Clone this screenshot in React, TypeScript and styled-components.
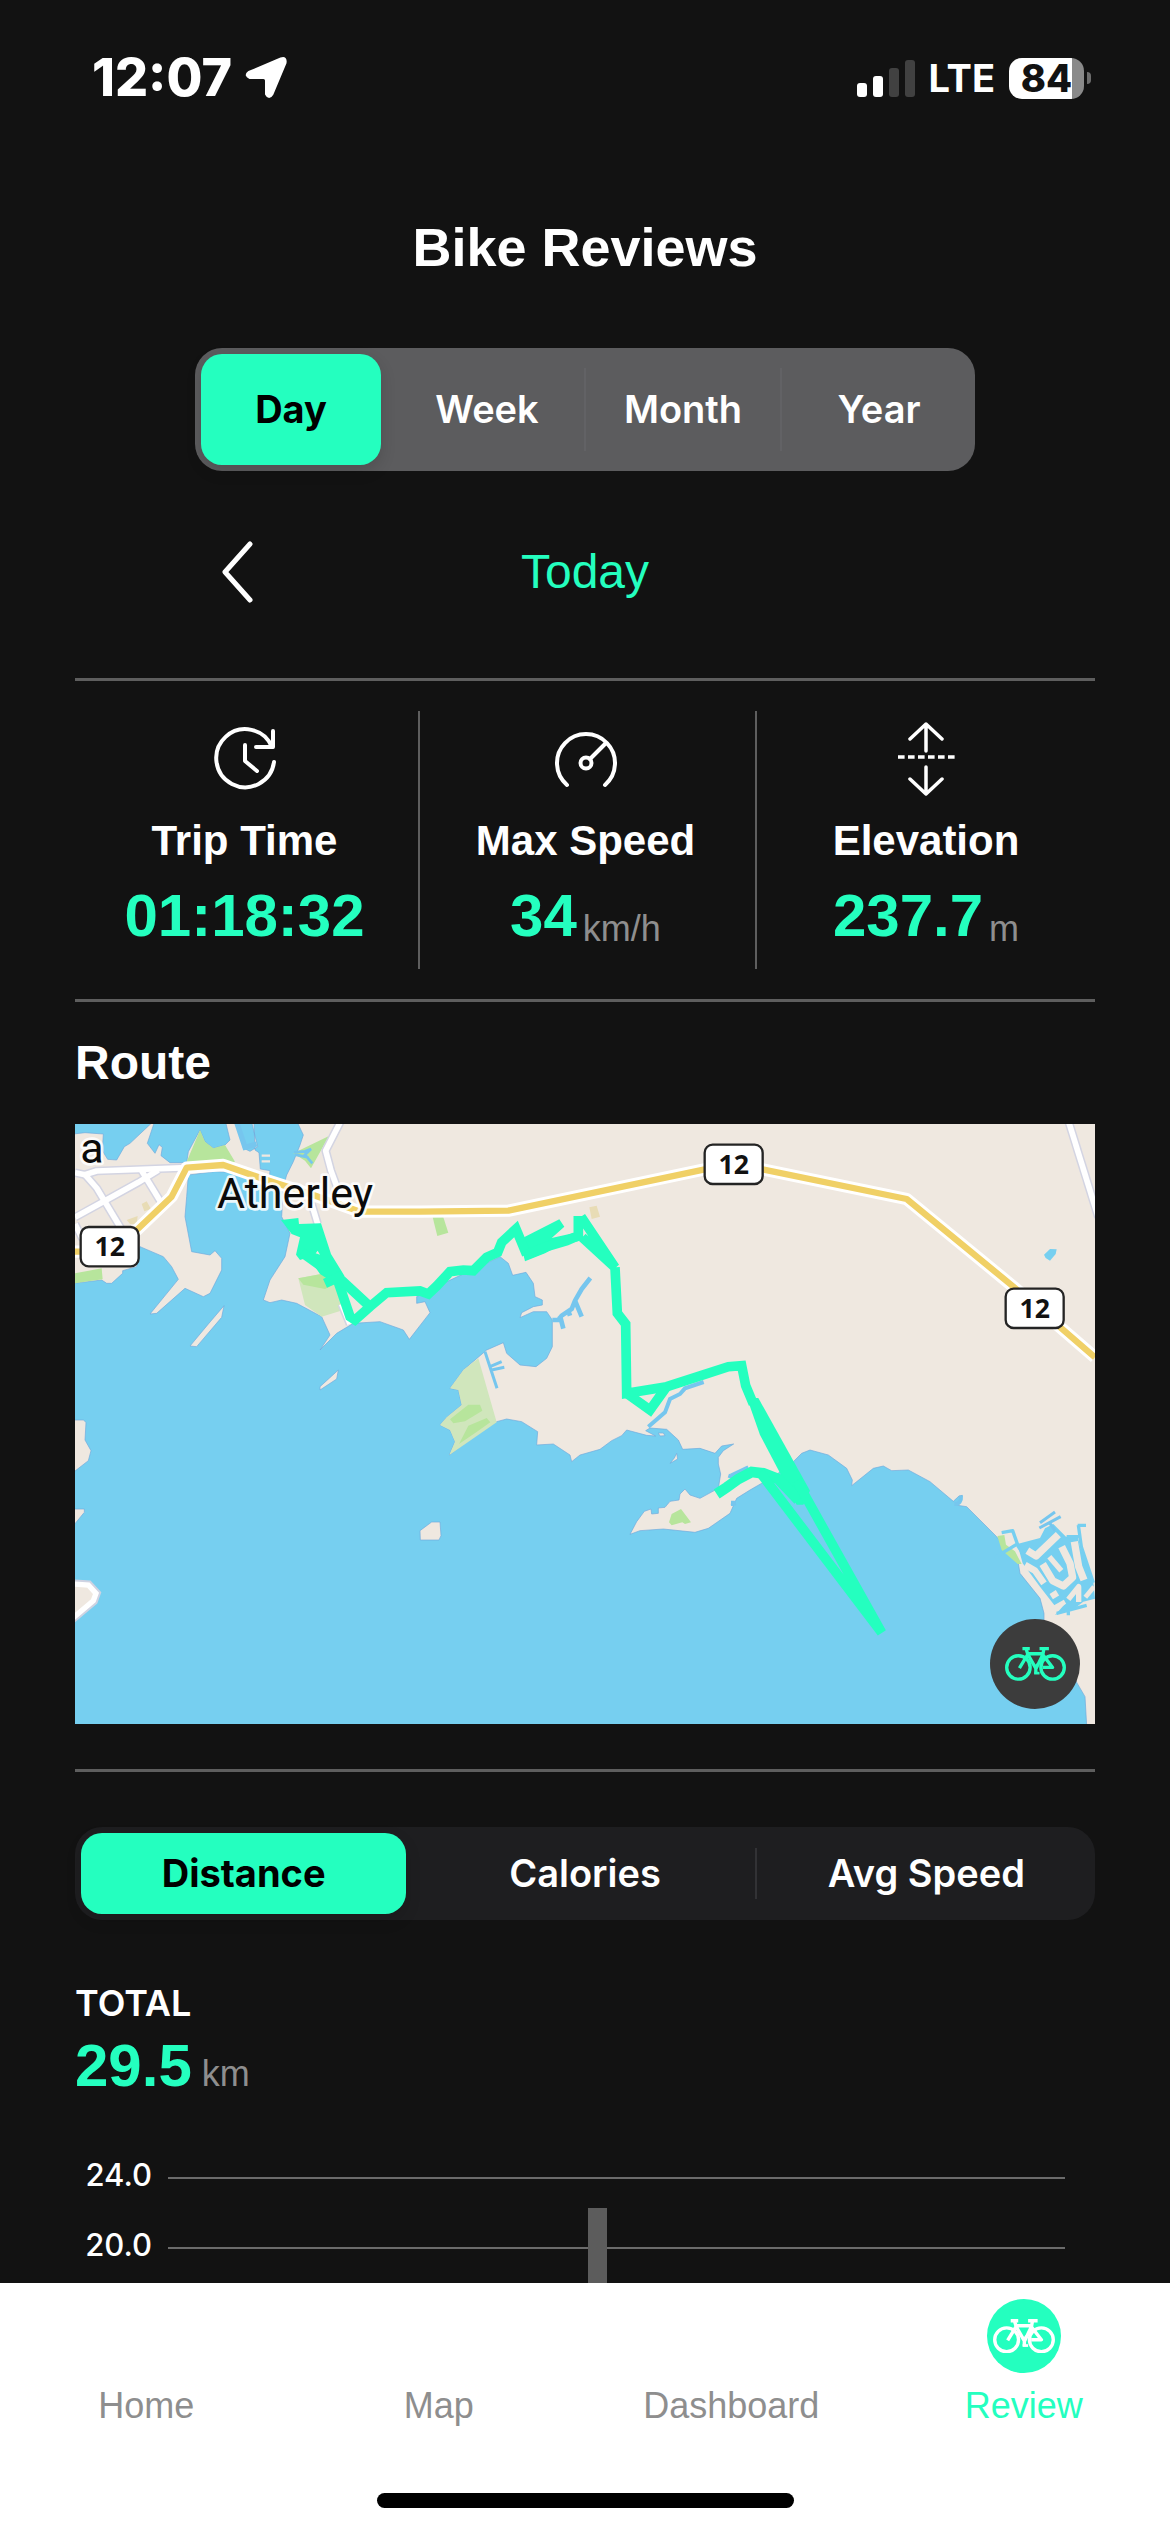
import React, { useState } from "react";
import styled, { createGlobalStyle } from "styled-components";

const color = {
  bg: "#121212",
  accent: "#24ffbf",
  line: "#5e5e5e",
  muted: "#8e8e8e",
  white: "#ffffff",
};

const helvetica = `"Liberation Sans", Arial, sans-serif`;
const system = `Inter, "Liberation Sans", sans-serif`;

const GlobalStyle = createGlobalStyle`
  *, *::before, *::after { box-sizing: border-box; }
  body { margin: 0; background: ${color.bg}; }
  h1, h2, h3, p, dl, dt, dd, ul { margin: 0; padding: 0; }
  button { font: inherit; color: inherit; background: none; border: 0; padding: 0; cursor: pointer; }
`;

const Screen = styled.div`
  min-height: 100vh;
  display: flex;
  flex-direction: column;
  background: ${color.bg};
  color: ${color.white};
  font-family: ${helvetica};
`;

const StatusBar = styled.header`
  height: 156px;
  padding: 0 79px 0 92px;
  display: flex;
  align-items: center;
  justify-content: space-between;
  font-family: ${system};
`;

const StatusGroup = styled.div<{ $gap: number }>`
  display: flex;
  align-items: center;
  gap: ${(p) => p.$gap}px;
`;

const Clock = styled.span`
  font-size: 52px;
  font-weight: 800;
  line-height: 60px;
`;

const Network = styled.span`
  font-size: 38px;
  font-weight: 700;
  line-height: 48px;
`;

const Battery = styled.div`
  display: flex;
  align-items: center;
  gap: 3px;
`;

const BatteryBody = styled.div<{ $level: number }>`
  width: 75px;
  height: 41px;
  border-radius: 13px;
  display: flex;
  align-items: center;
  justify-content: center;
  background: linear-gradient(to right, #fff ${(p) => p.$level}%, #8a8a8a ${(p) => p.$level}%);
  color: ${color.bg};
  font-size: 38px;
  font-weight: 800;
  line-height: 41px;
`;

const BatteryCap = styled.div`
  width: 4px;
  height: 12px;
  border-radius: 0 4px 4px 0;
  background: #6d6d6d;
`;

const Main = styled.main`
  flex: 1;
  padding: 59px 75px 0;
`;

const Title = styled.h1`
  margin-bottom: 69px;
  text-align: center;
  font-size: 54px;
  line-height: 64px;
`;

const Segments = styled.div<{ $tone: "light" | "dark" }>`
  display: flex;
  height: ${(p) => (p.$tone === "light" ? 123 : 93)}px;
  margin: 0 ${(p) => (p.$tone === "light" ? 120 : 0)}px;
  padding: 6px;
  border-radius: 27px;
  background: ${(p) => (p.$tone === "light" ? "#5c5c5e" : "#1e1e20")};
  font-family: ${system};
`;

const Segment = styled.button<{ $active: boolean }>`
  flex: 1 1 0;
  padding-bottom: 2px;
  border-radius: 21px;
  font-size: 38px;
  line-height: 46px;
  font-weight: ${(p) => (p.$active ? 700 : 600)};
  color: ${(p) => (p.$active ? "#000" : color.white)};
  background: ${(p) => (p.$active ? color.accent : "transparent")};
  box-shadow: ${(p) => (p.$active ? "0 6px 16px rgba(0, 0, 0, 0.14)" : "none")};
`;

const Separator = styled.span<{ $tone: "light" | "dark"; $hidden: boolean }>`
  flex: none;
  width: 2px;
  margin: ${(p) => (p.$tone === "light" ? 14 : 15)}px 7px;
  background: ${(p) => (p.$hidden ? "transparent" : p.$tone === "light" ? "#626265" : "#323235")};
`;

const DateRow = styled.div`
  display: grid;
  grid-template-columns: 1fr auto 1fr;
  align-items: center;
  margin: 70px 120px 75px;
`;

const BackButton = styled.button`
  display: flex;
  justify-self: start;
  padding-left: 24px;
`;

const DateLabel = styled.h2`
  font-size: 48px;
  font-weight: 400;
  line-height: 62px;
  color: ${color.accent};
`;

const Divider = styled.hr`
  height: 3px;
  margin: 0;
  border: 0;
  background: ${color.line};
`;

const Stats = styled.section`
  display: grid;
  grid-template-columns: 345fr 337fr 338fr;
  padding: 30px 0;
`;

const Stat = styled.div`
  display: flex;
  flex-direction: column;
  align-items: center;
  padding: 10px 4px 20px 0;
  border-right: 2px solid ${color.line};

  &:last-child {
    padding-right: 0;
    border-right: 0;
  }
`;

const StatLabel = styled.h3`
  margin: 19px 0 17px;
  font-size: 42px;
  line-height: 50px;
`;

const Reading = styled.p<{ $align: "flex-end" | "baseline"; $gap: number }>`
  display: flex;
  align-items: ${(p) => p.$align};
  gap: ${(p) => p.$gap}px;
`;

const Figure = styled.strong`
  font-size: 60px;
  line-height: 66px;
  color: ${color.accent};
`;

const Unit = styled.span`
  font-size: 36px;
  line-height: 40px;
  color: ${color.muted};
`;

const SectionTitle = styled.h2`
  margin: 32px 0;
  font-size: 48px;
  line-height: 58px;
`;

const MapFrame = styled.div`
  position: relative;
  margin-bottom: 45px;
`;

const MapSvg = styled.svg`
  display: block;
  width: 100%;
  height: auto;
`;

const MapButton = styled.button`
  position: absolute;
  right: 15px;
  bottom: 15px;
  width: 90px;
  height: 90px;
  border-radius: 50%;
  display: grid;
  place-items: center;
  background: #3c3c3c;
  color: ${color.accent};
`;

const Metrics = styled.section`
  padding-top: 55px;
`;

const TotalLabel = styled.h3`
  margin: 61px 0 8px;
  font-family: ${system};
  font-size: 36px;
  font-weight: 600;
  line-height: 44px;
`;

const Chart = styled.div`
  position: relative;
  margin-top: 44px;
  padding-right: 30px;
`;

const ChartRow = styled.div`
  display: flex;
  align-items: center;
  height: 70px;
`;

const AxisLabel = styled.span`
  width: 93px;
  padding: 0 16px 6px 0;
  text-align: right;
  font-family: ${system};
  font-size: 31px;
  font-weight: 500;
  line-height: 38px;
`;

const GridLine = styled.span`
  flex: 1;
  height: 2px;
  background: #6b6b6b;
`;

const Bars = styled.div`
  position: absolute;
  inset: 0 30px 0 93px;
  display: grid;
  grid-template-columns: repeat(24, 1fr);
  align-items: end;
  justify-items: center;
`;

const Bar = styled.span`
  width: 19px;
  background: #5c5c5c;
`;

const BottomBar = styled.footer`
  position: sticky;
  bottom: 0;
  padding: 16px 0 24px;
  background: ${color.white};
`;

const Tabs = styled.nav`
  display: grid;
  grid-template-columns: repeat(4, 1fr);
`;

const Tab = styled.a<{ $active?: boolean }>`
  display: flex;
  flex-direction: column;
  align-items: center;
  gap: 12px;
  font-size: 36px;
  line-height: 42px;
  text-decoration: none;
  color: ${(p) => (p.$active ? color.accent : color.muted)};
`;

const TabIcon = styled.span<{ $active?: boolean }>`
  display: grid;
  place-items: center;
  width: 74px;
  height: 74px;
  border-radius: 50%;
  color: ${color.white};
  background: ${(p) => (p.$active ? color.accent : "transparent")};
`;

const HomeIndicator = styled.div`
  width: 417px;
  height: 15px;
  margin: 66px auto 0;
  border-radius: 8px;
  background: #000;
`;

function BikeIcon({ width }: { width: number }) {
  return (
    <svg width={width} viewBox="0 0 182 102" fill="none" stroke="currentColor" strokeWidth="10" strokeLinejoin="round" aria-hidden="true">
      <circle cx="40" cy="61" r="35" />
      <circle cx="142" cy="61" r="35" />
      <path d="M52 5h22M103 5h28M63 6l5 16-25 41M68 20h46M68 22l24 42v16M116 6l-3 16-21 44M112 22l30 39h-30M92 61l20-30" />
      <path d="M87 78h16" strokeWidth="8" />
    </svg>
  );
}

function TripTimeIcon() {
  return (
    <svg width="76" height="76" viewBox="0 0 76 76" fill="none" stroke="#fff" strokeWidth="4" strokeLinecap="round" strokeLinejoin="round" aria-hidden="true">
      <path d="M65 26A29 29 0 1 0 67 41" />
      <path d="M66 10v16H49M38 24v16l12 10" />
    </svg>
  );
}

function SpeedIcon() {
  return (
    <svg width="76" height="76" viewBox="0 0 76 76" fill="none" stroke="#fff" strokeWidth="4" strokeLinecap="round" aria-hidden="true">
      <path d="M19 64A29 29 0 1 1 57 64" />
      <circle cx="38" cy="42" r="5.5" />
      <path d="M42 38l15-15" />
    </svg>
  );
}

function ElevationIcon() {
  return (
    <svg width="76" height="76" viewBox="0 0 76 76" fill="none" stroke="#fff" strokeWidth="3.500" strokeLinecap="round" strokeLinejoin="round" aria-hidden="true">
      <path d="M38 3v27M22 18L38 3l16 15M38 46v27M22 58l16 15 16-15" />
      <path d="M10 36h57" strokeDasharray="6.6 3.4" strokeLinecap="butt" />
    </svg>
  );
}

const highwayWest = "0,383 60,383 175,328 290,218 335,131 445,123 575,168 715,213 855,263 1035,263 1300,260 1975,118 2495,225 2815,488 3060,700";

const localRoads = [
  "0,146 30,152 65,141 340,131",
  "30,152 65,192 130,300 160,350",
  "0,280 90,230 190,175 250,138",
  "200,140 255,230",
  "0,300 20,340 40,350",
  "798,-10 752,80 768,140 790,200",
  "710,240 728,300",
  "2980,-10 3070,280",
  "800,540 825,600",
];

function Shield({ x, y }: { x: number; y: number }) {
  return (
    <g>
      <rect x={x} y={y} width="174" height="118" rx="24" fill="#fff" stroke="#242424" strokeWidth="7" />
      <text x={x + 87} y={y + 87} textAnchor="middle" fontFamily="'Noto Sans', sans-serif" fontSize="80" fontWeight="700" fill="#111">
        12
      </text>
    </g>
  );
}

function RouteMap() {
  return (
    <MapSvg viewBox="0 0 3060 1800" role="img" aria-label="Route map">
      <rect width="3060" height="1800" fill="#76cff0" />

      {/* land */}
      <g fill="#efe8e0" stroke="#6fa9dc" strokeWidth="2">
        <path d="M-5 30L30 26 85 30 82 80 98 106 125 108 148 68 165 58 232-5H238L217 58 240 88 252 62 262 70 258 95 285 116H335L340 83 375 18 390 53 415 73 450 63 465 48 452-5H490L505 72 525 82 548 68 530-5H537L540 78 552 86 556 135 585 140 583 160 470 145 420 143 340 153 335 218 330 278 350 383 405 393 420 380 440 403V438L405 508 385 518 330 493 245 568 225 570 310 466 290 428 265 398 195 368 185 428 143 440V448L110 478H95L80 468-5 478Z" />
        <path d="M667-5L685 33 675 63 655 113 635 153 625 188 620 278 645 328 630 398 585 468 565 528 585 536 620 528 665 538 740 578 765 633 735 678 785 628 835 598 915 593 985 618 1003 646 1065 566 1050 533 1025 538V518L1105 478 1275 398 1300 418 1313 454 1353 445 1375 478 1380 518 1402 528V543L1375 548 1340 566 1335 581 1375 563 1415 563 1432 588V668L1415 703 1383 728 1335 723 1295 688 1285 656 1235 678 1165 738 1125 793 1150 798 1160 843 1115 880 1095 903 1125 918 1140 953 1123 993 1215 923 1265 893 1295 885 1340 893 1388 923 1385 963 1435 960 1485 993 1490 1013 1515 993 1575 976 1610 950 1640 935 1655 918 1715 934 1742 936 1712 920 1725 912 1775 916 1810 948 1823 976 1875 973 1920 988 1940 966 1976 960 1945 980 1930 1000 1930 1020 1937 1050 1930 1093 1875 1123 1845 1113 1830 1095 1815 1110 1812 1128 1785 1132 1770 1150 1750 1152V1168L1730 1170 1728 1155 1708 1162 1685 1193 1665 1231 1695 1220 1765 1215 1860 1225 1900 1213 1965 1168 1985 1123 2025 1098 2100 1055 2155 1013 2180 988 2205 978 2260 993 2315 1033 2332 1068 2330 1085 2395 1033 2425 1026 2450 1040 2500 1038 2565 1073 2635 1132 2652 1116 2662 1114 2648 1144 2675 1148 2765 1238 2830 1318 2835 1348 2895 1423 2907 1468V1510L2995 1658 3030 1718 3035 1805H3065V-5Z" />
        <path d="M447 545L440 580 365 668 345 666 400 600Z" />
        <path d="M790 738L785 765 735 798V788Z" />
        <path d="M-5 888H25L33 895 30 948 48 980 40 1010-5 1045Z" />
        <path d="M-5 1155H28V1165L-5 1205Z" />
        <path d="M1035 1220L1070 1194H1095L1098 1235 1092 1248H1036Z" />
        <path d="M1805 988L1808 1005 1785 1018 1798 1002Z" />
        <path d="M1750 927H1765L1770 935 1755 936Z" />
      </g>
      <path d="M-10 1380L40 1383 63 1408 55 1430-10 1485" fill="#efe8e0" stroke="#cfd3e2" strokeWidth="28" />
      <path d="M-10 1380L40 1383 63 1408 55 1430-10 1485" fill="#efe8e0" stroke="#fff" strokeWidth="16" />

      {/* parks */}
      <g fill="#b7e59c">
        <path d="M335 113L375 18 390 53 415 73 450 63 480 113 440 125Z" />
        <path d="M655 88L762 36 708 133 690 110Z" />
        <path d="M0 448L80 433 83 466 40 472 0 478Z" />
        <path d="M1073 280H1105L1120 326 1087 336Z" />
      </g>
      <path d="M670 463L775 443 805 558 740 578 690 543Z" fill="#d0e6bc" />
      <path d="M670 463L775 443 780 480 750 495 685 482Z" fill="#b7e59c" />
      <path d="M1210 703L1165 738 1125 793 1150 798 1160 843 1115 880 1095 903 1125 918 1140 953 1123 993 1265 895Z" fill="#d0e6bc" />
      <path d="M1125 886L1180 842 1215 842 1222 860 1170 892 1135 898ZM1152 960L1180 905 1235 882 1246 895 1210 920Z" fill="#b7e59c" />
      <path d="M1818 1155L1848 1195 1830 1200 1822 1195 1790 1204 1782 1195 1790 1170Z" fill="#b7e59c" />
      <path d="M2767 1236L2788 1233 2793 1262 2820 1282 2840 1320H2828L2780 1278Z" fill="#b7e59c" />
      <path d="M1543 250L1565 245 1575 278 1550 285ZM200 240L215 232 228 255 208 262ZM155 288L188 276 185 300 165 300Z" fill="#e8dcb5" />

      {/* creeks and slips */}
      <g fill="none" stroke="#76c6ee" strokeWidth="12">
        <path d="M485-5L510 70 545 60" strokeWidth="16" />
        <path d="M560 95H585M560 112H585" stroke="#efe8e0" strokeWidth="7" />
        <path d="M657 85L690 82 708 75 690 92 712 118M660 92L700 100" strokeWidth="8" />
        <path d="M1432 588H1450L1460 575 1490 555 1500 530 1520 495 1546 462M1455 575L1465 614M1480 560L1485 575M1500 530L1520 578" strokeWidth="14" />
        <path d="M1230 683L1266 793M1245 728L1280 713M1250 738L1288 730" strokeWidth="9" />
        <path d="M1886 774L1830 793 1815 810 1785 825 1770 865 1720 908" />
        <path d="M1968 1055L2020 1030M1960 1055L1975 1060" />
        <path d="M1968 1138H1975L1976 1145" strokeWidth="16" />
        <path d="M2638 1140Q2660 1140 2658 1115" />
      </g>

      {/* canal estate on the east shore */}
      <g transform="translate(1995 828)" fill="none" strokeLinejoin="round">
        <path d="M832 432L900 414 915 385 940 372 978 410 1012 405 1020 440 1060 548 1065 596 1030 605 1000 628 945 645 975 612 945 618 900 560 848 490Z" fill="#76cff0" />
        <path d="M765 472L832 432M785 398L818 392 835 440 862 480M1015 375L1024 440 1060 548M1013 376H1038M980 410H1015M950 640L1040 616M985 630V646" stroke="#76cff0" strokeWidth="10" />
        <path d="M900 368L945 336M898 384L962 350M930 370L945 392" stroke="#76c6ee" strokeWidth="9" />
        <g stroke="#efe8e0">
          <path d="M862 452L888 468 955 404" strokeWidth="22" />
          <path d="M855 495L885 512 912 550" strokeWidth="20" />
          <path d="M908 492L938 542 970 558 998 532 990 490 965 440" strokeWidth="22" />
          <path d="M928 470L964 512" strokeWidth="16" />
          <path d="M1003 425L1016 500 1032 540" strokeWidth="22" />
          <path d="M985 598L1016 560V606" strokeWidth="16" />
          <path d="M938 576L948 592" strokeWidth="22" />
          <path d="M935 628L975 605" strokeWidth="14" />
          <path d="M1036 592L1062 560" strokeWidth="14" />
        </g>
      </g>
      <path d="M2907 392L2925 375 2945 376 2942 390 2925 410 2912 402Z" fill="#76cff0" />

      {/* roads */}
      <g fill="none" strokeLinejoin="round">
        {localRoads.map((points) => (
          <polyline key={points} points={points} stroke="#d3d4e2" strokeWidth="26" />
        ))}
        {localRoads.map((points) => (
          <polyline key={points} points={points} stroke="#fff" strokeWidth="17" />
        ))}
        <polyline points={highwayWest} stroke="#fff" strokeWidth="37" />
        <polyline points={highwayWest} stroke="#f0d066" strokeWidth="19" />
      </g>

      {/* recorded track */}
      <g fill={color.accent}>
        <path d="M618 288L670 282 672 300 738 298 768 390 808 455 790 485 735 450 700 400 675 408 663 392 675 340 650 330Z" />
        <path d="M1350 338L1453 286 1468 308 1430 342 1500 326 1515 350 1450 366 1410 388 1350 412 1335 350Z" />
        <path d="M2016 822H2050L2205 1100 2185 1142 2165 1142 2055 933Z" />
      </g>
      <path d="M728 380L735 392 722 388Z" fill="#efe8e0" />
      <g fill="none" stroke={color.accent} strokeWidth="29" strokeLinejoin="miter" strokeMiterlimit="2">
        <path d="M680 385L785 460 825 578 840 588 885 548 935 506 1035 501 1060 510 1085 486 1125 443 1165 438 1195 440 1235 400 1268 385 1280 355 1323 315 1355 392" />
        <path d="M750 478L790 460 885 548" />
        <path d="M1355 392L1415 368 1475 350 1510 335V276M1518 278L1620 430 1522 340M1620 430L1627 568 1652 600 1655 808 1775 788 1960 728 2000 725 2012 785 2035 840" />
        <path d="M1655 808L1725 858 1775 788" />
        <path d="M1925 1110L1955 1090 1990 1065 2030 1044 2065 1048 2110 1065 2170 1128" strokeWidth="32" />
        <path d="M2165 1070L2420 1526 2055 1045" />
      </g>

      <g fontFamily="Roboto, sans-serif" fill="#0b0b0b" stroke="#fff" strokeOpacity="0.85" strokeWidth="16" strokeLinejoin="round" paintOrder="stroke">
        <text x="426" y="253" fontSize="129">Atherley</text>
        <text x="16" y="118" fontSize="129">a</text>
      </g>
      <Shield x={17} y={309} />
      <Shield x={1889} y={62} />
      <Shield x={2792} y={494} />
    </MapSvg>
  );
}

interface PickerProps {
  label: string;
  options: string[];
  tone: "light" | "dark";
}

function Picker({ label, options, tone }: PickerProps) {
  const [selected, setSelected] = useState(0);
  return (
    <Segments role="group" aria-label={label} $tone={tone}>
      {options.map((option, i) => (
        <React.Fragment key={option}>
          {i > 0 && <Separator $tone={tone} $hidden={i === selected || i - 1 === selected} />}
          <Segment type="button" aria-pressed={i === selected} $active={i === selected} onClick={() => setSelected(i)}>
            {option}
          </Segment>
        </React.Fragment>
      ))}
    </Segments>
  );
}

const stats = [
  { label: "Trip Time", value: "01:18:32", unit: "", Icon: TripTimeIcon },
  { label: "Max Speed", value: "34", unit: "km/h", Icon: SpeedIcon },
  { label: "Elevation", value: "237.7", unit: "m", Icon: ElevationIcon },
];

const axis = ["24.0", "20.0"];
const pixelsPerKm = 70 / 4;
const axisFloor = 18;
const rides = [{ hour: 11, km: 22.3 }];
const tabs = ["Home", "Map", "Dashboard", "Review"];

export default function App() {
  return (
    <Screen>
      <GlobalStyle />
      <StatusBar>
        <StatusGroup $gap={12}>
          <Clock>12:07</Clock>
          <svg width="44" height="44" viewBox="0 0 44 44" fill="#fff" stroke="#fff" strokeWidth="3" strokeLinejoin="round" aria-hidden="true">
            <path d="M37 3Q42 1 41 7L28 38Q25 43 22.500 38V24.500Q22.500 21.500 19.500 21.500H6Q1 19.500 5 16.500Z" />
          </svg>
        </StatusGroup>
        <StatusGroup $gap={14}>
          <svg width="58" height="38" viewBox="0 0 58 38" aria-hidden="true">
            <rect x="0" y="24" width="10" height="14" rx="3" fill="#fff" />
            <rect x="16" y="17" width="10" height="21" rx="3" fill="#fff" />
            <rect x="32" y="9" width="10" height="29" rx="3" fill="#414141" />
            <rect x="48" y="1" width="10" height="37" rx="3" fill="#414141" />
          </svg>
          <Network>LTE</Network>
          <Battery>
            <BatteryBody $level={84}>84</BatteryBody>
            <BatteryCap />
          </Battery>
        </StatusGroup>
      </StatusBar>

      <Main>
        <Title>Bike Reviews</Title>
        <Picker label="Period" tone="light" options={["Day", "Week", "Month", "Year"]} />

        <DateRow>
          <BackButton type="button" aria-label="Previous day">
            <svg width="36" height="62" viewBox="0 0 36 62" fill="none" stroke="#fff" strokeWidth="5" strokeLinecap="round" strokeLinejoin="round" aria-hidden="true">
              <path d="M31 3L6 31l25 28" />
            </svg>
          </BackButton>
          <DateLabel>Today</DateLabel>
        </DateRow>

        <Divider />
        <Stats>
          {stats.map(({ label, value, unit, Icon }) => (
            <Stat key={label}>
              <Icon />
              <StatLabel>{label}</StatLabel>
              <Reading $align="flex-end" $gap={6}>
                <Figure>{value}</Figure>
                {unit && <Unit>{unit}</Unit>}
              </Reading>
            </Stat>
          ))}
        </Stats>
        <Divider />

        <SectionTitle>Route</SectionTitle>
        <MapFrame>
          <RouteMap />
          <MapButton type="button" aria-label="Show ride">
            <BikeIcon width={61} />
          </MapButton>
        </MapFrame>
        <Divider />

        <Metrics>
          <Picker label="Metric" tone="dark" options={["Distance", "Calories", "Avg Speed"]} />
          <TotalLabel>TOTAL</TotalLabel>
          <Reading $align="baseline" $gap={10}>
            <Figure>29.5</Figure>
            <Unit>km</Unit>
          </Reading>
          <Chart>
            {axis.map((tick) => (
              <ChartRow key={tick}>
                <AxisLabel>{tick}</AxisLabel>
                <GridLine />
              </ChartRow>
            ))}
            <Bars>
              {rides.map(({ hour, km }) => (
                <Bar key={hour} style={{ gridColumn: hour + 1, height: Math.round((km - axisFloor) * pixelsPerKm) }} />
              ))}
            </Bars>
          </Chart>
        </Metrics>
      </Main>

      <BottomBar>
        <Tabs aria-label="Main">
          {tabs.map((tab) => {
            const active = tab === "Review";
            return (
              <Tab key={tab} href={`#${tab.toLowerCase()}`} $active={active} aria-current={active ? "page" : undefined}>
                <TabIcon $active={active}>{active && <BikeIcon width={62} />}</TabIcon>
                {tab}
              </Tab>
            );
          })}
        </Tabs>
        <HomeIndicator />
      </BottomBar>
    </Screen>
  );
}
